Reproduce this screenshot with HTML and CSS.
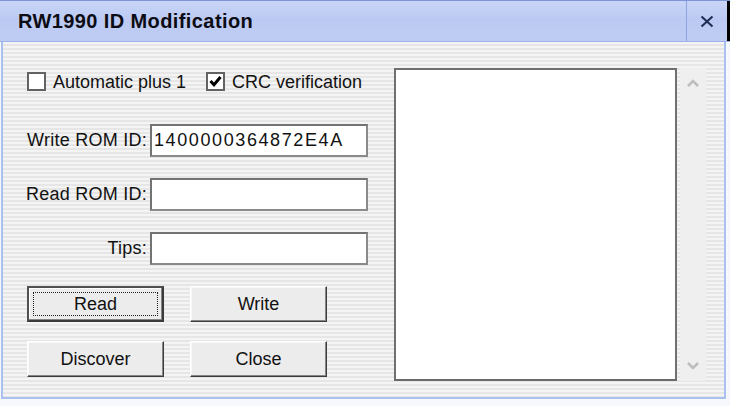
FILE: index.html
```html
<!DOCTYPE html>
<html>
<head>
<meta charset="utf-8">
<link rel="stylesheet" href="styles.css">
</head>
<body>
<div class="window">
  <div class="titlebar">
    <div class="title">RW1990 ID Modification</div>
    <div class="close">
      <svg width="14" height="13" viewBox="0 0 14 13"><path d="M1.5 1.5 L12.5 11.5 M12.5 1.5 L1.5 11.5" stroke="#1f2d55" stroke-width="2.1" fill="none"/></svg>
    </div>
    <div class="strip"></div>
  </div>
  <div class="frame">
    <div class="left">
      <div class="checks">
        <label class="check"><span class="box"></span><span>Automatic plus 1</span></label>
        <label class="check"><span class="box"><svg width="15" height="15" viewBox="0 0 15 15"><path d="M2.5 7 L6 10.8 L12.5 3" stroke="#000" stroke-width="3" fill="none"/></svg></span><span>CRC verification</span></label>
      </div>
      <div class="field f-write"><span class="lbl">Write ROM ID:</span><div class="input mono">1400000364872E4A</div></div>
      <div class="field f-read"><span class="lbl">Read ROM ID:</span><div class="input"></div></div>
      <div class="field f-tips"><span class="lbl">Tips:</span><div class="input"></div></div>
      <div class="buttons b1">
        <div class="btn default"><span class="focus">Read</span></div>
        <div class="btn">Write</div>
      </div>
      <div class="buttons b2">
        <div class="btn">Discover</div>
        <div class="btn">Close</div>
      </div>
    </div>
    <div class="list"></div>
    <div class="scroll">
      <svg width="14" height="9" viewBox="0 0 14 9"><path d="M2 7 L7 2 L12 7" stroke="#bdbdbd" stroke-width="2.6" fill="none"/></svg>
      <svg width="14" height="9" viewBox="0 0 14 9"><path d="M2 2 L7 7 L12 2" stroke="#bdbdbd" stroke-width="2.6" fill="none"/></svg>
    </div>
  </div>
</div>
</body>
</html>
```
FILE: styles.css
```css
html, body {
  margin: 0;
  padding: 0;
  background: #f7f8fb;
}
.window {
  width: 730px;
  height: 406px;
  font-family: "Liberation Sans", Arial, sans-serif;
  color: #111;
  overflow: hidden;
}
.titlebar {
  display: flex;
  height: 40px;
  border-top: 1px solid #7d96da;
  border-bottom: 1px solid #9db2ea;
  background: linear-gradient(to bottom, #c9d5f7 0%, #bccaf3 45%, #bfcdf4 100%);
}
.title {
  flex: 1;
  padding-left: 18px;
  font-weight: bold;
  font-size: 20px;
  letter-spacing: 0.4px;
  line-height: 40px;
  color: #0c0c14;
}
.close {
  width: 40px;
  border-left: 1px solid #8ea4e0;
  display: flex;
  align-items: center;
  justify-content: center;
}
.strip {
  width: 3px;
  background: #000;
}
.frame {
  width: 697px;
  height: 355px;
  margin-left: 1px;
  border-left: 2px solid #a9c0f0;
  border-right: 2px solid #a9c0f0;
  border-bottom: 2px solid #a9c0f0;
  background: repeating-linear-gradient(to bottom, #f4f4f4 0, #f4f4f4 2px, #e6e6e6 2px, #e6e6e6 4px);
  display: flex;
  align-items: flex-start;
  padding-left: 24px;
}
.left {
  width: 341px;
  display: flex;
  flex-direction: column;
  padding-top: 30px;
  font-size: 18px;
}
.checks {
  display: flex;
  gap: 20px;
  height: 20px;
}
.check {
  display: flex;
  align-items: center;
  gap: 7px;
  line-height: 20px;
  margin-top: -1px;
}
.box {
  width: 15px;
  height: 15px;
  border: 2px solid #626262;
  background: #fff;
  display: flex;
  align-items: center;
  justify-content: center;
  flex: none;
}
.field {
  display: flex;
  align-items: center;
  justify-content: flex-end;
}
.f-write { margin-top: 32px; }
.f-read { margin-top: 21px; }
.f-tips { margin-top: 21px; }
.lbl {
  white-space: nowrap;
  margin-right: 3px;
  letter-spacing: 0.25px;
}
.input {
  flex: none;
  width: 212px;
  height: 29px;
  border: 2px solid #737373;
  border-bottom-color: #8a8a8a;
  border-right-color: #8a8a8a;
  background: #fff;
  line-height: 28px;
  padding-left: 2px;
}
.mono {
  letter-spacing: 1.6px;
}
.buttons {
  display: flex;
  gap: 26px;
}
.b1 { margin-top: 21px; }
.b2 { margin-top: 19px; }
.btn {
  width: 137px;
  height: 36px;
  box-sizing: border-box;
  background: #ececec;
  border: 1px solid;
  border-color: #ffffff #3c3c3c #3c3c3c #ffffff;
  box-shadow: inset -1px -1px 0 #858585, inset 1px 1px 0 #f8f8f8;
  display: flex;
  align-items: center;
  justify-content: center;
  line-height: 20px;
}
.btn.default {
  border: 2px solid #505050;
  border-bottom-color: #3a3a3a;
  border-right-color: #3a3a3a;
  box-shadow: inset -1px -1px 0 #858585, inset 1px 1px 0 #ffffff;
  padding: 4px;
}
.focus {
  flex: 1;
  align-self: stretch;
  border: 1px dotted #222;
  display: flex;
  align-items: center;
  justify-content: center;
}
.list {
  width: 279px;
  height: 309px;
  margin-left: 26px;
  margin-top: 26px;
  border: 2px solid #707070;
  border-bottom-color: #6a6a6a;
  background: #fff;
  flex: none;
}
.scroll {
  width: 26px;
  height: 313px;
  margin-left: 3px;
  margin-top: 26px;
  background: #efefef;
  display: flex;
  flex-direction: column;
  justify-content: space-between;
  align-items: center;
  padding: 11px 0;
  box-sizing: border-box;
}
```
